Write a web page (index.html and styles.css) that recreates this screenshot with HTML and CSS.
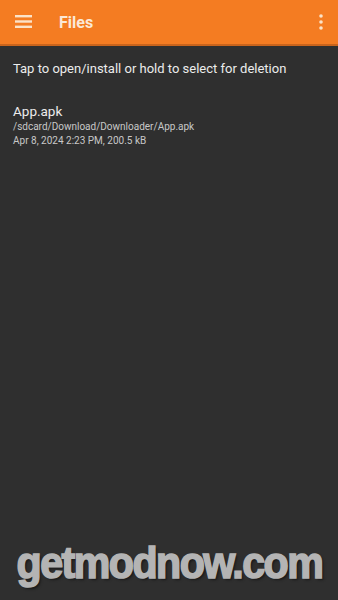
FILE: index.html
```html
<!DOCTYPE html>
<html>
<head>
<meta charset="utf-8">
<link rel="stylesheet" href="styles.css">
</head>
<body>
<div class="app">
  <header class="bar">
    <svg class="menu" width="18" height="14" viewBox="0 0 18 14"><rect x="0" y="0" width="17" height="2.4" fill="#fbe3c9"/><rect x="0" y="5.3" width="17" height="2.4" fill="#fbe3c9"/><rect x="0" y="10.6" width="17" height="2.4" fill="#fbe3c9"/></svg>
    <div class="title">Files</div>
    <svg class="more" width="6" height="16" viewBox="0 0 6 16"><circle cx="3" cy="2" r="1.8" fill="#fbe3c9"/><circle cx="3" cy="8" r="1.8" fill="#fbe3c9"/><circle cx="3" cy="14" r="1.8" fill="#fbe3c9"/></svg>
  </header>
  <main class="content">
    <p class="hint">Tap to open/install or hold to select for deletion</p>
    <div class="file">
      <div class="name">App.apk</div>
      <div class="meta">/sdcard/Download/Downloader/App.apk</div>
      <div class="meta">Apr 8, 2024 2:23 PM, 200.5 kB</div>
    </div>
  </main>
  <div class="watermark"><span class="wm-text">getmodnow.com</span></div>
</div>
</body>
</html>
```
FILE: styles.css
```css
html, body { margin: 0; padding: 0; }
body { background: #2f2f2f; font-family: Roboto, "Liberation Sans", sans-serif; }
.app { width: 338px; height: 600px; display: flex; flex-direction: column; background: #2f2f2f; overflow: hidden; }
.bar { height: 44px; background: #f47c22; border-bottom: 2px solid #c9641c; display: flex; align-items: center; padding: 0 15px; box-sizing: content-box; flex: none; }
.menu { flex: none; }
.title { margin-left: 26px; color: #fbe8d6; font-size: 16px; font-weight: 700; flex: 1; }
.more { flex: none; margin-right: -1px; }
.content { flex: 1; padding: 0 13px; }
.hint { margin: 14px 0 0; color: #ececec; font-size: 13px; line-height: 18px; }
.file { margin-top: 24px; }
.name { color: #ececec; font-size: 13.5px; line-height: 18px; }
.meta { color: #c8c8c8; font-size: 10px; line-height: 13.5px; }
.watermark { height: 72px; flex: none; display: flex; justify-content: center; align-items: flex-start; }
.wm-text { display: inline-block; font-family: "Liberation Sans", Arial, sans-serif; font-weight: 700; font-size: 40px; line-height: 40px; color: #b4b4b4; letter-spacing: -1.5px; -webkit-text-stroke: 1.5px #b4b4b4; text-shadow: 2px 2px 2px #1a1a1a; transform: scale(1.03, 1.12); transform-origin: center top; margin-top: 12px; white-space: nowrap; }
```
